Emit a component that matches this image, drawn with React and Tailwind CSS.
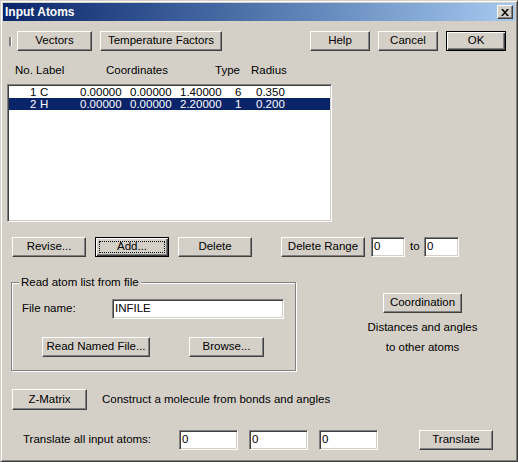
import React from "react";

const font = { fontFamily: '"Liberation Sans", Arial, sans-serif' };

// classic raised button
function Btn({ children, w, h = "h-[20px]", isDefault, focus, className = "" }) {
  const face = isDefault
    ? "border border-black shadow-[inset_1px_1px_#fff,inset_-1px_-1px_#404040,inset_-2px_-2px_#808080]"
    : "border border-t-white border-l-white border-r-[#404040] border-b-[#404040] shadow-[inset_-1px_-1px_#808080]";
  return (
    <div className={`relative flex items-center justify-center shrink-0 bg-[#d4d0c8] text-black ${face} ${w} ${h} ${className}`}>
      {focus && (
        <div className="absolute inset-[3px] border border-dotted border-black" />
      )}
      <span className="relative">{children}</span>
    </div>
  );
}

function Field({ value, w, className = "" }) {
  return (
    <div
      className={`flex items-center h-[20px] shrink-0 bg-white pl-[2px] border border-t-[#808080] border-l-[#808080] border-b-white border-r-white shadow-[inset_1px_1px_#404040,inset_-1px_-1px_#d4d0c8] ${w} ${className}`}
    >
      {value}
    </div>
  );
}

const atoms = [
  { n: "1", label: "C", x: "0.00000", y: "0.00000", z: "1.40000", type: "6", r: "0.350" },
  { n: "2", label: "H", x: "0.00000", y: "0.00000", z: "2.20000", type: "1", r: "0.200", selected: true },
];

export default function App() {
  return (
    <div style={font} className="w-[518px] h-[462px] text-[11.5px] text-black bg-[#d4d0c8]">
      {/* Window frame */}
      <div className="w-[518px] h-[462px] border border-t-[#d4d0c8] border-l-[#d4d0c8] border-r-[#404040] border-b-[#404040] shadow-[inset_1px_1px_#fff,inset_-1px_-1px_#808080] p-[2px] flex flex-col">
        {/* Title bar */}
        <div className="h-[18px] flex items-center justify-between bg-linear-to-r from-[#0a246a] to-[#a6caf0] pl-[2px] pr-[2px] shrink-0">
          <span className="text-white font-bold text-[12px] leading-[18px]">Input Atoms</span>
          <div className="w-[16px] h-[14px] flex items-center justify-center bg-[#d4d0c8] border border-t-white border-l-white border-r-[#404040] border-b-[#404040] shadow-[inset_-1px_-1px_#808080]">
            <svg width="8" height="7" viewBox="0 0 8 7">
              <path d="M0 0h2l2 2.5L6 0h2L5 3.5 8 7H6L4 4.5 2 7H0l3-3.5z" fill="#000" />
            </svg>
          </div>
        </div>

        {/* Top buttons */}
        <div className="flex items-center mt-[10px] pr-[9px]">
          <div className="ml-[6px] w-[3px] h-[9px] bg-[#808080] border-r border-white" />
          <Btn w="w-[75px]" className="ml-[5px]">Vectors</Btn>
          <Btn w="w-[122px]" className="ml-[8px]">Temperature Factors</Btn>
          <Btn w="w-[60px]" className="ml-auto">Help</Btn>
          <Btn w="w-[60px]" className="ml-[8px]">Cancel</Btn>
          <Btn w="w-[60px]" className="ml-[8px]" isDefault>OK</Btn>
        </div>

        {/* Column headers */}
        <div className="flex h-[12px] leading-[12px] mt-[13px] ml-[12px]">
          <span className="w-[91px]">No. Label</span>
          <span className="w-[109px]">Coordinates</span>
          <span className="w-[36px]">Type</span>
          <span>Radius</span>
        </div>

        {/* Atom list */}
        <div className="ml-[4px] mt-[8px] w-[325px] h-[138px] bg-white border border-t-[#808080] border-l-[#808080] border-b-white border-r-white shadow-[inset_1px_1px_#404040,inset_-1px_-1px_#d4d0c8] p-[1px]">
          {atoms.map((a) => (
            <div
              key={a.n}
              className={`flex h-[12px] leading-[12px] pl-[21px] whitespace-pre ${a.selected ? "bg-[#0a246a] text-white" : ""}`}
            >
              <span className="w-[10px]">{a.n}</span>
              <span className="w-[40px]">{a.label}</span>
              <span className="w-[50px]">{a.x}</span>
              <span className="w-[50px]">{a.y}</span>
              <span className="w-[55px]">{a.z}</span>
              <span className="w-[21px]">{a.type}</span>
              <span>{a.r}</span>
            </div>
          ))}
        </div>

        {/* Edit buttons */}
        <div className="flex items-center mt-[15px]">
          <Btn w="w-[74px]" className="ml-[9px]">Revise...</Btn>
          <Btn w="w-[74px]" className="ml-[9px]" isDefault focus>Add...</Btn>
          <Btn w="w-[74px]" className="ml-[9px]">Delete</Btn>
          <Btn w="w-[84px]" className="ml-[29px]">Delete Range</Btn>
          <Field value="0" w="w-[34px]" className="ml-[6px]" />
          <span className="ml-[5px] w-[14px]">to</span>
          <Field value="0" w="w-[35px]" />
        </div>

        {/* File group + coordination */}
        <div className="flex items-start mt-[25px]">
          <div className="relative ml-[8px] w-[285px] h-[89px] border border-[#808080] shadow-[1px_1px_#fff,inset_1px_1px_#fff] pt-[16px]">
            <span className="absolute left-[7px] top-[-8px] px-[2px] bg-[#d4d0c8] leading-[14px]">
              Read atom list from file
            </span>
            <div className="flex items-center">
              <span className="ml-[10px] w-[90px]">File name:</span>
              <Field value="INFILE" w="w-[172px]" />
            </div>
            <div className="flex items-center mt-[18px]">
              <Btn w="w-[108px]" className="ml-[30px]">Read Named File...</Btn>
              <Btn w="w-[75px]" className="ml-[39px]">Browse...</Btn>
            </div>
          </div>
          <div className="ml-[62px] w-[129px] flex flex-col items-center mt-[11px]">
            <Btn w="w-[79px]">Coordination</Btn>
            <div className="mt-[4px] leading-[20px] text-center">
              <div>Distances and angles</div>
              <div>to other atoms</div>
            </div>
          </div>
        </div>

        {/* Z-Matrix */}
        <div className="flex items-center mt-[18px]">
          <Btn w="w-[75px]" h="h-[21px]" className="ml-[9px]">Z-Matrix</Btn>
          <span className="ml-[15px]">Construct a molecule from bonds and angles</span>
        </div>

        {/* Translate */}
        <div className="flex items-center mt-[20px]">
          <span className="ml-[20px] w-[156px]">Translate all input atoms:</span>
          <Field value="0" w="w-[59px]" />
          <Field value="0" w="w-[59px]" className="ml-[11px]" />
          <Field value="0" w="w-[59px]" className="ml-[11px]" />
          <Btn w="w-[74px]" className="ml-[41px]">Translate</Btn>
        </div>
      </div>
    </div>
  );
}
